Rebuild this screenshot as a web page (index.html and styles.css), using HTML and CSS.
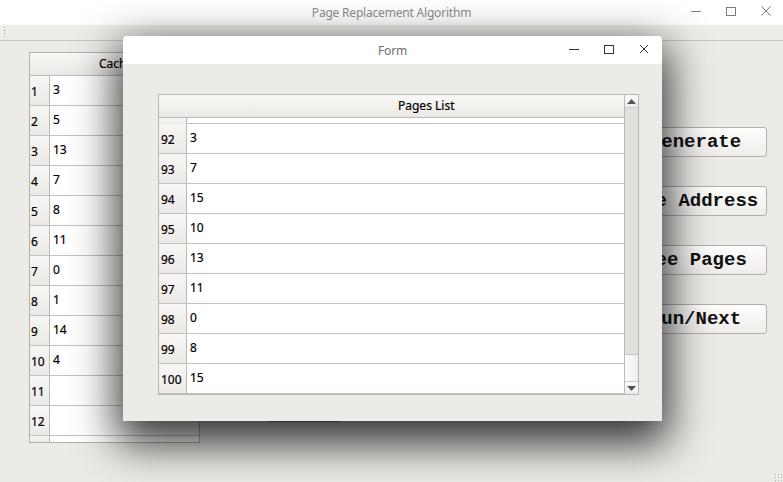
FILE: index.html
```html
<!DOCTYPE html>
<html>
<head>
<meta charset="utf-8">
<link rel="stylesheet" href="styles.css">
</head>
<body>
<div class="win">
  <div class="titlebar">
    <span class="title">Page Replacement Algorithm</span>
    <div class="ctrls main-ctrls">
      <svg width="12" height="12" viewBox="0 0 12 12"><path d="M1 6.5h10" stroke="#7c7c7c" stroke-width="1"/></svg>
      <svg width="12" height="12" viewBox="0 0 12 12"><rect x="1.5" y="2.5" width="9" height="8" fill="none" stroke="#7c7c7c" stroke-width="1"/></svg>
      <svg width="12" height="12" viewBox="0 0 12 12"><path d="M1.5 1.5l9 9M10.5 1.5l-9 9" stroke="#7c7c7c" stroke-width="1"/></svg>
    </div>
  </div>
  <div class="toolbar"><span class="grip"></span></div>
  <div class="content">
    <div class="ctable">
      <div class="chead"><span class="corner"></span><span class="htext">Cache</span></div>
      <div class="crow"><span class="rh">1</span><span class="cell">3</span></div>
      <div class="crow"><span class="rh">2</span><span class="cell">5</span></div>
      <div class="crow"><span class="rh">3</span><span class="cell">13</span></div>
      <div class="crow"><span class="rh">4</span><span class="cell">7</span></div>
      <div class="crow"><span class="rh">5</span><span class="cell">8</span></div>
      <div class="crow"><span class="rh">6</span><span class="cell">11</span></div>
      <div class="crow"><span class="rh">7</span><span class="cell">0</span></div>
      <div class="crow"><span class="rh">8</span><span class="cell">1</span></div>
      <div class="crow"><span class="rh">9</span><span class="cell">14</span></div>
      <div class="crow"><span class="rh">10</span><span class="cell">4</span></div>
      <div class="crow"><span class="rh">11</span><span class="cell"></span></div>
      <div class="crow"><span class="rh">12</span><span class="cell"></span></div>
      <div class="crow part"><span class="rh"></span><span class="cell"></span></div>
    </div>
    <div class="mid"><div class="hidden-box"></div></div>
    <div class="buttons">
      <button class="btn">Generate</button>
      <button class="btn">See Address</button>
      <button class="btn">See Pages</button>
      <button class="btn">Run/Next</button>
    </div>
  </div>
  <span class="sizegrip"></span>
</div>

<div class="dialog">
  <div class="dtitle">
    <span class="title dark">Form</span>
    <div class="ctrls dlg-ctrls">
      <svg width="12" height="12" viewBox="0 0 12 12"><path d="M1 6.5h10" stroke="#333" stroke-width="1"/></svg>
      <svg width="12" height="12" viewBox="0 0 12 12"><rect x="1.5" y="2.5" width="9" height="8" fill="none" stroke="#333" stroke-width="1"/></svg>
      <svg width="12" height="12" viewBox="0 0 12 12"><path d="M2 2l8 8M10 2l-8 8" stroke="#333" stroke-width="1"/></svg>
    </div>
  </div>
  <div class="dbody">
    <div class="ptable">
      <div class="pmain">
        <div class="phead"><span class="pcorner"></span><span class="phtext">Pages List</span></div>
        <div class="prow part"><span class="prh"></span><span class="pcell"></span></div>
        <div class="prow"><span class="prh">92</span><span class="pcell">3</span></div>
        <div class="prow"><span class="prh">93</span><span class="pcell">7</span></div>
        <div class="prow"><span class="prh">94</span><span class="pcell">15</span></div>
        <div class="prow"><span class="prh">95</span><span class="pcell">10</span></div>
        <div class="prow"><span class="prh">96</span><span class="pcell">13</span></div>
        <div class="prow"><span class="prh">97</span><span class="pcell">11</span></div>
        <div class="prow"><span class="prh">98</span><span class="pcell">0</span></div>
        <div class="prow"><span class="prh">99</span><span class="pcell">8</span></div>
        <div class="prow"><span class="prh">100</span><span class="pcell">15</span></div>
      </div>
      <div class="vscroll">
        <div class="sbtn up"><svg width="9" height="5" viewBox="0 0 9 5"><path d="M0 5L4.5 0L9 5Z" fill="#555"/></svg></div>
        <div class="groove"></div>
        <div class="thumb"></div>
        <div class="sbtn down"><svg width="9" height="5" viewBox="0 0 9 5"><path d="M0 0L4.5 5L9 0Z" fill="#555"/></svg></div>
      </div>
    </div>
  </div>
</div>
</body>
</html>
```
FILE: styles.css
```css
* { box-sizing: border-box; }
html, body { margin: 0; padding: 0; }
body {
  width: 783px;
  height: 482px;
  overflow: hidden;
  background: #edebe7;
  font-family: "Noto Sans", "DejaVu Sans", sans-serif;
  font-size: 12px;
  color: #000;
  position: relative;
}
.win { width: 783px; height: 482px; display: flex; flex-direction: column; position: relative; }
.titlebar {
  height: 25px;
  background: #fff;
  display: flex;
  align-items: center;
  justify-content: center;
  position: relative;
}
.title { color: #8c8c90; font-size: 12px; letter-spacing: -0.2px; }
.title.dark { color: #6e6e74; }
.ctrls { position: absolute; display: flex; align-items: center; }
.main-ctrls { right: 11px; top: 5px; gap: 23px; }
.toolbar {
  height: 16px;
  background: #efedea;
  border-bottom: 1px solid #c9c6c2;
  position: relative;
}
.grip {
  position: absolute;
  left: 3px; top: 1px;
  width: 3px; height: 12px;
  background-image: radial-gradient(circle, #a8a5a1 0.7px, transparent 0.8px);
  background-size: 3px 3px;
}
.content { flex: 1; display: flex; align-items: flex-start; }

.ctable, .ptable { -webkit-text-stroke: 0.2px #000; }

/* left table */
.ctable {
  margin-left: 29px;
  margin-top: 11px;
  width: 171px;
  height: 391px;
  border: 1px solid #b3b0ac;
  background: #fff;
  display: flex;
  flex-direction: column;
  overflow: hidden;
}
.chead {
  height: 23px;
  flex: none;
  display: flex;
  border-bottom: 1px solid #bdbab6;
  background: linear-gradient(#f9f8f6, #ebe9e5);
}
.corner { width: 20px; }
.htext { padding-left: 49px; line-height: 22px; }
.crow { height: 30px; flex: none; display: flex; border-bottom: 1px solid #c4c1bd; }
.crow.part { height: 6px; border-bottom: none; }
.rh {
  width: 20px;
  flex: none;
  border-right: 1px solid #bdbab6;
  background: linear-gradient(#f8f7f5, #ebe9e5);
  padding-left: 1px;
  padding-top: 7px;
}
.cell { flex: 1; padding-left: 3px; padding-top: 5px; }

.mid { width: 140px; margin-left: 68px; }
.hidden-box { margin-top: 351px; width: 72px; height: 30px; border: 1px solid #8a8884; border-radius: 2px; }

.buttons {
  margin-left: auto;
  margin-right: 16px;
  margin-top: 86px;
  display: flex;
  flex-direction: column;
  gap: 29px;
}
.btn {
  width: 143px;
  height: 30px;
  border: 1px solid #b2afab;
  border-radius: 3px;
  background: linear-gradient(#fdfdfc, #efedea);
  font-family: "Liberation Mono", "Courier New", monospace;
  font-weight: bold;
  font-size: 19px;
  color: #111;
  padding: 0;
}
.sizegrip {
  position: absolute;
  right: 0; bottom: 0;
  width: 9px; height: 9px;
  background-image: radial-gradient(circle, #b0ada9 0.7px, transparent 0.8px);
  background-size: 3px 3px;
}

/* dialog */
.dialog {
  position: absolute;
  left: 123px;
  top: 36px;
  width: 539px;
  height: 385px;
  background: #edebe7;
  border-radius: 4px 4px 0 0;
  box-shadow: 0 16px 44px 6px rgba(0,0,0,0.8);
  display: flex;
  flex-direction: column;
}
.dtitle {
  height: 28px;
  background: #fff;
  border-radius: 4px 4px 0 0;
  display: flex;
  align-items: center;
  justify-content: center;
  position: relative;
  flex: none;
}
.dlg-ctrls { right: 12px; top: 7px; gap: 23px; }
.dbody { padding-top: 30px; padding-left: 35px; }
.ptable {
  width: 481px;
  height: 301px;
  border: 1px solid #b9b6b2;
  display: flex;
  background: #fff;
}
.pmain { flex: 1; display: flex; flex-direction: column; overflow: hidden; }
.phead {
  height: 23px;
  flex: none;
  display: flex;
  border-bottom: 1px solid #bdbab6;
  background: linear-gradient(#faf9f7, #ebe9e5);
}
.pcorner { width: 28px; }
.phtext { padding-left: 211px; line-height: 21px; }
.prow { height: 30px; flex: none; display: flex; border-bottom: 1px solid #c4c1bd; }
.prow.part { height: 6px; }
.prh {
  width: 28px;
  flex: none;
  border-right: 1px solid #bdbab6;
  background: linear-gradient(#f8f7f5, #ebe9e5);
  padding-left: 2px;
  padding-top: 7px;
}
.pcell { flex: 1; padding-left: 3px; padding-top: 5px; }

.vscroll {
  width: 14px;
  border-left: 1px solid #bdbab6;
  display: flex;
  flex-direction: column;
  background: #e2e0dc;
  -webkit-text-stroke: 0;
}
.sbtn {
  height: 13px;
  flex: none;
  background: linear-gradient(#fbfaf9, #efedea);
  display: flex;
  align-items: center;
  justify-content: center;
}
.sbtn.up { border-bottom: 1px solid #cfccc8; }
.sbtn.down { border-top: 1px solid #cfccc8; }
.groove { flex: 1; }
.thumb { height: 27px; flex: none; border-top: 1px solid #c8c5c1; background: linear-gradient(90deg, #fdfdfc, #f0eeeb); }
```
